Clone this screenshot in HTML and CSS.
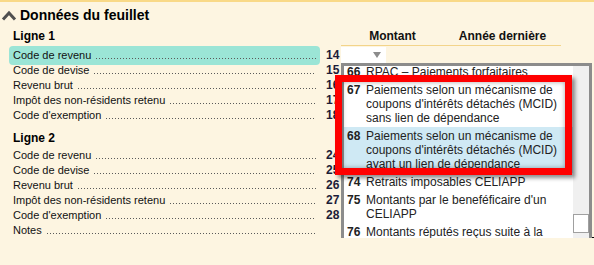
FILE: index.html
```html
<!DOCTYPE html>
<html lang="fr">

<head>
    <meta charset="UTF-8">
    <meta name="viewport" content="width=device-width, initial-scale=1.0">
    <title>Données du feuillet</title>
    <link rel="stylesheet" href="styles.css">
</head>

<body>
    <div class="panel">
        <div class="title">
            <svg class="chevron" width="16" height="11" viewBox="0 0 16 11">
                <polyline points="2,9.5 8,3 14,9.5" fill="none" stroke="#505050" stroke-width="3" />
            </svg>
            Données du feuillet
        </div>

        <!-- Ligne 1 -->
        <div class="group">
            <div class="grid head">
                <div class="heading">Ligne 1</div>
                <div></div>
                <div class="col-head">Montant</div>
                <div class="col-head">Année dernière</div>
            </div>

            <div class="grid row active">
                <div class="label-cell"><span>Code de revenu</span><span class="leader"></span></div>
                <div class="num">14</div>
                <div class="field">
                    <div class="select">
                        <span class="caret"></span>

                        <div class="dropdown">
                            <div class="list-wrap">
                                <div class="list">
                                    <div class="list-inner">
                                        <div class="opt"><b>66</b><span>RPAC – Paiements forfaitaires</span></div>
                                        <div class="opt"><b>67</b><span>Paiements selon un mécanisme de coupons d'intérêts détachés (MCID) sans lien de dépendance</span></div>
                                        <div class="opt selected"><b>68</b><span>Paiements selon un mécanisme de coupons d'intérêts détachés (MCID) ayant un lien de dépendance</span></div>
                                        <div class="opt"><b>74</b><span>Retraits imposables CELIAPP</span></div>
                                        <div class="opt"><b>75</b><span>Montants par le beneféficaire d'un CELIAPP</span></div>
                                        <div class="opt"><b>76</b><span>Montants réputés reçus suite à la cessation d'un CELIAPP</span></div>
                                    </div>
                                </div>
                                <div class="scrollbar"><div class="thumb"></div></div>
                            </div>
                            <div class="hint">Taper pour filtrer la liste.</div>
                            <div class="callout"></div>
                        </div>
                    </div>
                </div>
            </div>

            <div class="grid row">
                <div class="label-cell"><span>Code de devise</span><span class="leader"></span></div>
                <div class="num">15</div>
            </div>
            <div class="grid row">
                <div class="label-cell"><span>Revenu brut</span><span class="leader"></span></div>
                <div class="num">16</div>
            </div>
            <div class="grid row">
                <div class="label-cell"><span>Impôt des non-résidents retenu</span><span class="leader"></span></div>
                <div class="num">17</div>
            </div>
            <div class="grid row">
                <div class="label-cell"><span>Code d'exemption</span><span class="leader"></span></div>
                <div class="num">18</div>
            </div>
        </div>

        <!-- Ligne 2 -->
        <div class="group second">
            <div class="grid head">
                <div class="heading">Ligne 2</div>
            </div>

            <div class="grid row">
                <div class="label-cell"><span>Code de revenu</span><span class="leader"></span></div>
                <div class="num">24</div>
            </div>
            <div class="grid row">
                <div class="label-cell"><span>Code de devise</span><span class="leader"></span></div>
                <div class="num">25</div>
            </div>
            <div class="grid row">
                <div class="label-cell"><span>Revenu brut</span><span class="leader"></span></div>
                <div class="num">26</div>
            </div>
            <div class="grid row">
                <div class="label-cell"><span>Impôt des non-résidents retenu</span><span class="leader"></span></div>
                <div class="num">27</div>
            </div>
            <div class="grid row">
                <div class="label-cell"><span>Code d'exemption</span><span class="leader"></span></div>
                <div class="num">28</div>
            </div>
            <div class="grid row">
                <div class="label-cell"><span>Notes</span><span class="leader"></span></div>
                <div class="num"></div>
                <div class="notes-field"></div>
            </div>
        </div>
    </div>
</body>

</html>
```

FILE: styles.css
```css
* {
    margin: 0;
    padding: 0;
    box-sizing: border-box;
    font-family: 'Liberation Sans', Arial, sans-serif;
}

body {
    background-color: #fdf5e1;
    border-top: 2px solid #f9d987;
    color: #111;
    overflow: hidden;
}

.panel {
    position: relative;
}

.title {
    display: flex;
    align-items: center;
    gap: 3px;
    padding: 4px 0 0 1px;
    font-size: 14px;
    font-weight: bold;
    line-height: 18px;
    color: #000;
}

.chevron {
    flex: none;
}

.group {
    padding-left: 9px;
    margin-top: 5px;
}

.group.second {
    margin-top: 8px;
}

.grid {
    display: grid;
    grid-template-columns: 311px 21px 103px 117px 1fr;
    align-items: start;
}

.heading {
    font-size: 12px;
    font-weight: bold;
    line-height: 15px;
    padding: 0 4px 2px;
    color: #000;
}

.col-head {
    font-size: 12px;
    font-weight: bold;
    line-height: 15px;
    text-align: center;
    padding-bottom: 1px;
    border-bottom: 1px solid #f3d48a;
    color: #111;
}

.row {
    font-size: 11px;
    line-height: 15px;
}

.label-cell {
    display: flex;
    align-items: flex-start;
    padding: 0 4px;
    white-space: nowrap;
}

.leader {
    flex: 1;
    height: 11px;
    margin-left: 5px;
    background-image: linear-gradient(to right, #5a5a5a 1px, transparent 1px);
    background-size: 3px 1px;
    background-repeat: repeat-x;
    background-position: left bottom;
}

.row.active {
    margin-bottom: -2px;
    position: relative;
    z-index: 5;
}

.row.active .label-cell {
    background-color: #9be5d6;
    border-radius: 4px;
    padding: 2px 4px;
}

.row.active .num {
    padding-top: 2px;
}

.num {
    padding-left: 6px;
    font-size: 12px;
    font-weight: bold;
    color: #1c1c38;
}

.field {
    padding-top: 1px;
}

/* Code select of the active row */
.select {
    position: relative;
    width: 45px;
    height: 16px;
    background: white;
    display: flex;
    justify-content: flex-end;
    align-items: center;
    padding-right: 5px;
}

.caret {
    width: 0;
    height: 0;
    border-left: 4px solid transparent;
    border-right: 4px solid transparent;
    border-top: 6px solid #8c8c8c;
}

.dropdown {
    position: absolute;
    top: 100%;
    left: 0;
    width: 251px;
    height: 197px;
    border: 3px solid #8c8c8c;
    background: white;
    display: flex;
    flex-direction: column;
    z-index: 10;
}

.list-wrap {
    flex: 1;
    display: flex;
    min-height: 0;
}

.list {
    flex: 1;
    overflow: hidden;
}

.list-inner {
    margin-top: -3px;
}

.opt {
    display: flex;
    padding: 2px 4px 2px 3px;
    font-size: 12px;
    line-height: 14px;
    color: #222;
}

.opt b {
    flex: none;
    width: 19px;
}

.opt.selected {
    background-color: #cfe9f4;
}

.scrollbar {
    width: 16px;
    background: #f0f0f0;
}

.thumb {
    margin-top: 148px;
    height: 19px;
    background: white;
    border: 1px solid #a0a0a0;
}

.hint {
    height: 15px;
    background: #d4d4d4;
    font-size: 12px;
    font-style: italic;
    line-height: 15px;
    text-align: center;
    color: #333;
}

/* Red annotation round options 67 and 68 */
.callout {
    position: absolute;
    left: -9px;
    top: 9px;
    width: 237px;
    height: 100px;
    border: 7px solid #ff0000;
    box-shadow: 3px 3px 4px rgba(0, 0, 0, 0.45), inset 0 0 5px rgba(0, 0, 0, 0.35);
}

.notes-field {
    grid-column: 3 / -1;
    height: 15px;
    border-bottom: 1px solid #000;
}
```
